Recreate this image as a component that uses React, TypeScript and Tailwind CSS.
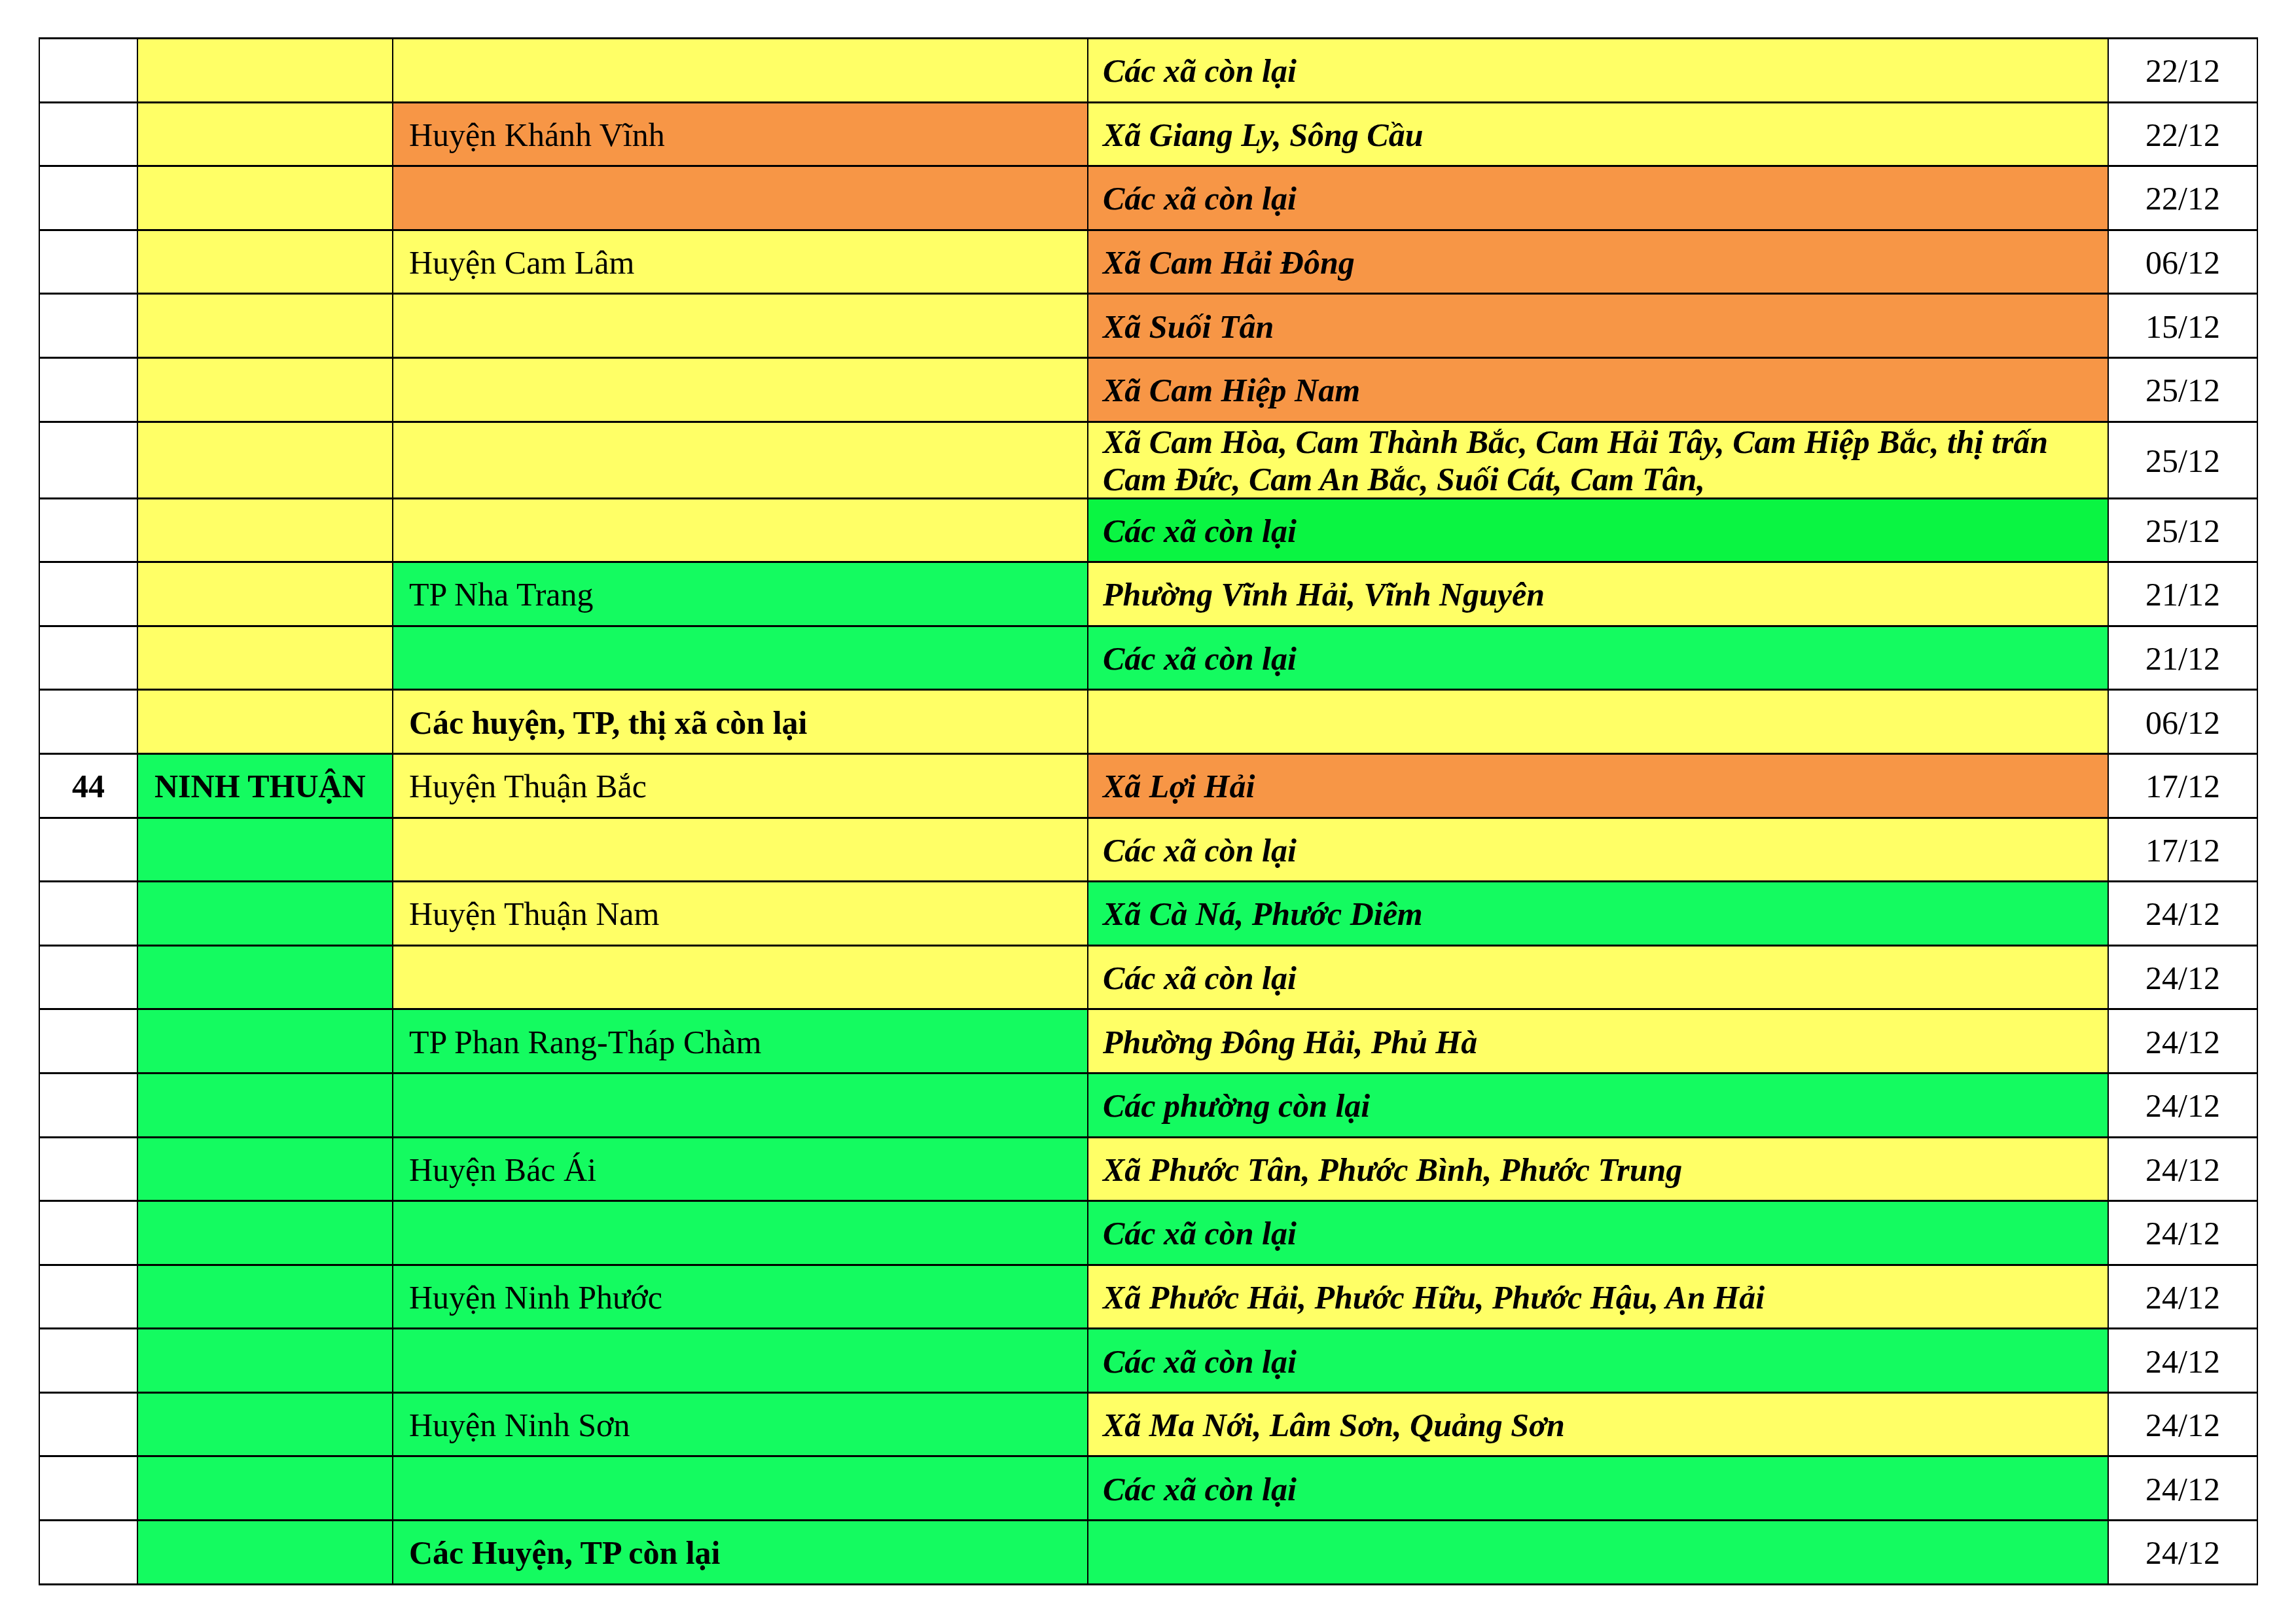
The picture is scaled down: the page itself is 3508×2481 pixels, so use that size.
import React from 'react';

type Fill = 'w' | 'y' | 'o' | 'g' | 'g2';

interface Row {
  no?: string;
  prov?: string;
  provFill: Fill;
  dist?: string;
  distBold?: boolean;
  distFill: Fill;
  ward?: React.ReactNode;
  wardFill: Fill;
  date: string;
  tall?: boolean;
}

const fills: Record<Fill, string> = {
  w: 'bg-white',
  y: 'bg-[#ffff66]',
  o: 'bg-[#f79646]',
  g: 'bg-[#14fb60]',
  g2: 'bg-[#0af542]',
};

const rows: Row[] = [
  { provFill: 'y', distFill: 'y', ward: 'Các xã còn lại', wardFill: 'y', date: '22/12' },
  { provFill: 'y', dist: 'Huyện Khánh Vĩnh', distFill: 'o', ward: 'Xã Giang Ly, Sông Cầu', wardFill: 'y', date: '22/12' },
  { provFill: 'y', distFill: 'o', ward: 'Các xã còn lại', wardFill: 'o', date: '22/12' },
  { provFill: 'y', dist: 'Huyện Cam Lâm', distFill: 'y', ward: 'Xã Cam Hải Đông', wardFill: 'o', date: '06/12' },
  { provFill: 'y', distFill: 'y', ward: 'Xã Suối Tân', wardFill: 'o', date: '15/12' },
  { provFill: 'y', distFill: 'y', ward: 'Xã Cam Hiệp Nam', wardFill: 'o', date: '25/12' },
  {
    provFill: 'y',
    distFill: 'y',
    ward: (
      <>
        Xã Cam Hòa, Cam Thành Bắc, Cam Hải Tây, Cam Hiệp Bắc, thị trấn
        <br />
        Cam Đức, Cam An Bắc, Suối Cát, Cam Tân,
      </>
    ),
    wardFill: 'y',
    date: '25/12',
    tall: true,
  },
  { provFill: 'y', distFill: 'y', ward: 'Các xã còn lại', wardFill: 'g2', date: '25/12' },
  { provFill: 'y', dist: 'TP Nha Trang', distFill: 'g', ward: 'Phường Vĩnh Hải, Vĩnh Nguyên', wardFill: 'y', date: '21/12' },
  { provFill: 'y', distFill: 'g', ward: 'Các xã còn lại', wardFill: 'g', date: '21/12' },
  { provFill: 'y', dist: 'Các huyện, TP, thị xã còn lại', distBold: true, distFill: 'y', wardFill: 'y', date: '06/12' },
  { no: '44', prov: 'NINH THUẬN', provFill: 'g', dist: 'Huyện Thuận Bắc', distFill: 'y', ward: 'Xã Lợi Hải', wardFill: 'o', date: '17/12' },
  { provFill: 'g', distFill: 'y', ward: 'Các xã còn lại', wardFill: 'y', date: '17/12' },
  { provFill: 'g', dist: 'Huyện Thuận Nam', distFill: 'y', ward: 'Xã Cà Ná, Phước Diêm', wardFill: 'g', date: '24/12' },
  { provFill: 'g', distFill: 'y', ward: 'Các xã còn lại', wardFill: 'y', date: '24/12' },
  { provFill: 'g', dist: 'TP Phan Rang-Tháp Chàm', distFill: 'g', ward: 'Phường Đông Hải, Phủ Hà', wardFill: 'y', date: '24/12' },
  { provFill: 'g', distFill: 'g', ward: 'Các phường còn lại', wardFill: 'g', date: '24/12' },
  { provFill: 'g', dist: 'Huyện Bác Ái', distFill: 'g', ward: 'Xã Phước Tân, Phước Bình, Phước Trung', wardFill: 'y', date: '24/12' },
  { provFill: 'g', distFill: 'g', ward: 'Các xã còn lại', wardFill: 'g', date: '24/12' },
  { provFill: 'g', dist: 'Huyện Ninh Phước', distFill: 'g', ward: 'Xã Phước Hải, Phước Hữu, Phước Hậu, An Hải', wardFill: 'y', date: '24/12' },
  { provFill: 'g', distFill: 'g', ward: 'Các xã còn lại', wardFill: 'g', date: '24/12' },
  { provFill: 'g', dist: 'Huyện Ninh Sơn', distFill: 'g', ward: 'Xã Ma Nới, Lâm Sơn, Quảng Sơn', wardFill: 'y', date: '24/12' },
  { provFill: 'g', distFill: 'g', ward: 'Các xã còn lại', wardFill: 'g', date: '24/12' },
  { provFill: 'g', dist: 'Các Huyện, TP còn lại', distBold: true, distFill: 'g', wardFill: 'g', date: '24/12' },
];

export default function App() {
  return (
    <div className="min-h-screen bg-white pl-[59px] pt-[57px] text-black text-[50px] leading-[57px] font-['Liberation_Serif','Times_New_Roman',serif]">
      <div className="w-[3391px] border-x-2 border-t-[3px] border-black">
        {rows.map((r, i) => (
          <div
            key={i}
            className={`flex border-b-[3px] border-black ${r.tall ? 'h-[117px]' : 'h-[97.6px]'}`}
          >
            {/* STT */}
            <div className="flex w-[150px] shrink-0 items-center justify-center border-r-2 border-black bg-white pt-[3px] font-bold">
              {r.no}
            </div>
            {/* Tỉnh */}
            <div className={`flex w-[390px] shrink-0 items-center border-r-2 border-black pl-[25px] pt-[3px] font-bold ${fills[r.provFill]}`}>
              {r.prov}
            </div>
            {/* Huyện */}
            <div
              className={`flex w-[1062px] shrink-0 items-center border-r-2 border-black pl-[24px] pt-[3px] ${r.distBold ? 'font-bold' : ''} ${fills[r.distFill]}`}
            >
              {r.dist}
            </div>
            {/* Xã */}
            <div className={`flex w-[1559px] shrink-0 items-center border-r-2 border-black pl-[22px] pt-[3px] font-bold italic ${fills[r.wardFill]}`}>
              <div>{r.ward}</div>
            </div>
            {/* Ngày */}
            <div className="flex flex-1 items-center justify-center bg-white pt-[3px]">{r.date}</div>
          </div>
        ))}
      </div>
    </div>
  );
}
